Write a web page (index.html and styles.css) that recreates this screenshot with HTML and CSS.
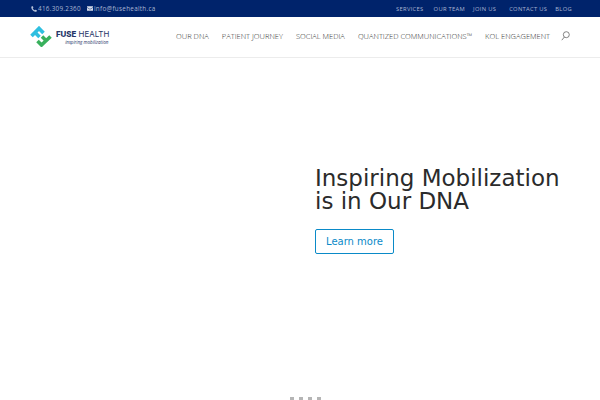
FILE: index.html
```html
<!DOCTYPE html>
<html lang="en">
<head>
<meta charset="utf-8">
<title>Fuse Health</title>
<link rel="stylesheet" href="styles.css">
</head>
<body>
<div class="topbar">
  <div class="contact">
    <span class="contact-item">
      <svg class="ico-phone" viewBox="0 0 8 8" width="6" height="6"><path d="M1.2 .4 2.6 .2 3.2 2.2 2.3 3C2.8 4.2 3.7 5.2 5 5.8L5.9 4.9 7.8 5.7 7.5 7.2C7.2 7.7 6.4 7.9 5.6 7.7 3 6.9 1 4.8 .4 2.2.2 1.4.6.7 1.2.4Z" fill="#b7c3da"/></svg>416.309.2360</span>
    <span class="contact-item">
      <svg class="ico-mail" viewBox="0 0 7 5" width="6" height="5"><path d="M0 0H7V.9L3.5 3 0 .9ZM0 1.7 3.5 3.8 7 1.7V5H0Z" fill="#d5dcea"/></svg>info@fusehealth.ca</span>
  </div>
  <nav class="secondary">
    <a class="first">SERVICES</a><a>OUR TEAM</a><a class="wide">JOIN US</a><a>CONTACT US</a><a>BLOG</a>
  </nav>
</div>
<header class="header">
  <div class="logo">
    <svg class="logo-mark" viewBox="0 0 22 21" width="22" height="21">
      <g fill="none" stroke-width="3.6">
        <path d="M1.5 10 9 2.4 13.5 7" stroke="#2fbfe0"/>
        <path d="M5 6.5 9.5 11" stroke="#2fbfe0"/>
        <path d="M20.5 10.5 11.5 19 7.5 15" stroke="#38b05c"/>
        <path d="M16 14.5 12 10.5" stroke="#38b05c"/>
      </g>
    </svg>
    <div class="logo-text">
      <div class="logo-name"><b>FUSE</b> HEALTH</div>
      <div class="logo-tag">inspiring mobilization</div>
    </div>
  </div>
  <nav class="primary">
    <a>OUR DNA</a><a>PATIENT JOURNEY</a><a>SOCIAL MEDIA</a><a>QUANTIZED COMMUNICATIONS™</a><a>KOL ENGAGEMENT</a>
    <svg class="search" viewBox="0 0 9 10" width="9" height="10"><circle cx="5.3" cy="3.7" r="3" fill="none" stroke="#666" stroke-width=".8"/><path d="M3.4 6 .8 9.2" stroke="#666" stroke-width=".8"/></svg>
  </nav>
</header>
<main class="hero">
  <div class="hero-copy">
    <h1>Inspiring Mobilization<br>is in Our DNA</h1>
    <a class="btn">Learn more</a>
  </div>
  <div class="dots"><i></i><i></i><i></i><i></i></div>
</main>
</body>
</html>
```
FILE: styles.css
```css
* { box-sizing: border-box; }
html, body { margin: 0; height: 100%; overflow: hidden; background: #fff; }
body { font-family: "Open Sans", sans-serif; display: flex; flex-direction: column; height: 400px; }
.topbar { height: 17px; background: #00236b; color: #a9b6d2; font-size: 6.3px; display: flex; justify-content: space-between; align-items: center; padding: 0 28px 0 31px; letter-spacing: .3px; flex: none; }
.contact { display: flex; gap: 6px; }
.contact-item { display: flex; align-items: center; gap: 1px; }
.secondary { display: flex; gap: 8px; font-size: 5.8px; }
.secondary .first { margin-right: 2px; }
.secondary .wide { margin-right: 5px; }
.header { height: 41px; flex: none; border-bottom: 1px solid #ececec; display: flex; align-items: center; justify-content: space-between; padding: 0 30px 2px 30px; }
.logo { display: flex; align-items: center; gap: 4px; }
.logo-text { padding-top: 3px; }
.logo-name { font-family: Inter, sans-serif; font-size: 7.9px; line-height: 9px; color: #263668; white-space: nowrap; }
.logo-name b { font-weight: 800; }
.logo-tag { font-size: 4.5px; line-height: 7px; font-style: italic; color: #263668; text-align: right; padding-right: 1px; }
.primary { display: flex; align-items: center; gap: 13px; font-size: 7.5px; font-weight: 300; color: #333; }
.search { margin-left: -2px; }
.hero { flex: 1; position: relative; padding: 109px 0 0 315px; }
h1 { margin: 0; font: 400 23px/23px "DejaVu Sans", sans-serif; color: #2b2b2b; white-space: nowrap; }
.btn { display: flex; align-items: center; justify-content: center; margin-top: 16px; width: 79px; height: 25px; border: 1px solid #0a8ac8; border-radius: 2px; font: 400 10px "DejaVu Sans", sans-serif; color: #0a8ac8; }
.dots { position: absolute; left: 290px; bottom: 0; display: flex; gap: 5px; }
.dots i { width: 4px; height: 3px; background: #b5b5b5; }
```
